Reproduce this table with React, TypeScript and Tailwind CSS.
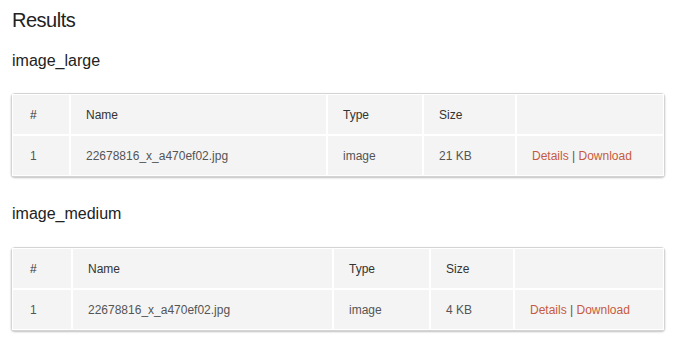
import React from 'react';

type FileRow = { id: number; name: string; type: string; size: string };

const groups: { title: string; widths: number[]; rows: FileRow[] }[] = [
  {
    title: 'image_large',
    widths: [58, 257, 96, 93, 148],
    rows: [{ id: 1, name: '22678816_x_a470ef02.jpg', type: 'image', size: '21 KB' }],
  },
  {
    title: 'image_medium',
    widths: [60, 261, 97, 84, 150],
    rows: [{ id: 1, name: '22678816_x_a470ef02.jpg', type: 'image', size: '4 KB' }],
  },
];

const headers = ['#', 'Name', 'Type', 'Size', ''];

const cell = 'h-[41px] bg-[#f4f4f4] border border-white text-left';

const ResultTable: React.FC<{ widths: number[]; rows: FileRow[] }> = ({ widths, rows }) => (
  <table className="table-fixed w-[654px] border-separate border-spacing-0 bg-white border border-[#d4d4d4] rounded-[4px] shadow-[0_1px_2px_rgba(0,0,0,0.25)] text-[12px]">
    <colgroup>
      {widths.map((w, i) => (
        <col key={i} style={{ width: w }} />
      ))}
    </colgroup>
    <thead>
      <tr>
        {headers.map((h, i) => (
          <th key={i} className={`${cell} font-normal text-[#333] ${i === 0 ? 'pl-[17px]' : 'pl-[15px]'}`}>
            {h}
          </th>
        ))}
      </tr>
    </thead>
    <tbody>
      {rows.map((r) => (
        <tr key={r.id}>
          <td className={`${cell} pl-[17px] text-[#555]`}>{r.id}</td>
          <td className={`${cell} pl-[15px] text-[#555]`}>{r.name}</td>
          <td className={`${cell} pl-[15px] text-[#555]`}>{r.type}</td>
          <td className={`${cell} pl-[15px] text-[#555]`}>{r.size}</td>
          <td className={`${cell} pl-[15px] text-[#555]`}>
            <a className="text-[#c65a40]">Details</a> | <a className="text-[#c65a40]">Download</a>
          </td>
        </tr>
      ))}
    </tbody>
  </table>
);

export default function App() {
  return (
    <div className="w-[680px] h-[349px] bg-white px-[11px] font-['Liberation_Sans',Arial,sans-serif] overflow-hidden">
      <h2 className="ml-[1px] mt-[8px] text-[20px] leading-[24px] text-[#222] tracking-[-0.5px]">Results</h2>
      {groups.map((g, i) => (
        <div key={g.title}>
          <h3 className={`ml-[1px] text-[16px] leading-[20px] text-[#222] ${i === 0 ? 'mt-[19px]' : 'mt-[27px]'}`}>
            {g.title}
          </h3>
          <div className={i === 0 ? 'mt-[22px]' : 'mt-[23px]'}>
            <ResultTable widths={g.widths} rows={g.rows} />
          </div>
        </div>
      ))}
    </div>
  );
}
